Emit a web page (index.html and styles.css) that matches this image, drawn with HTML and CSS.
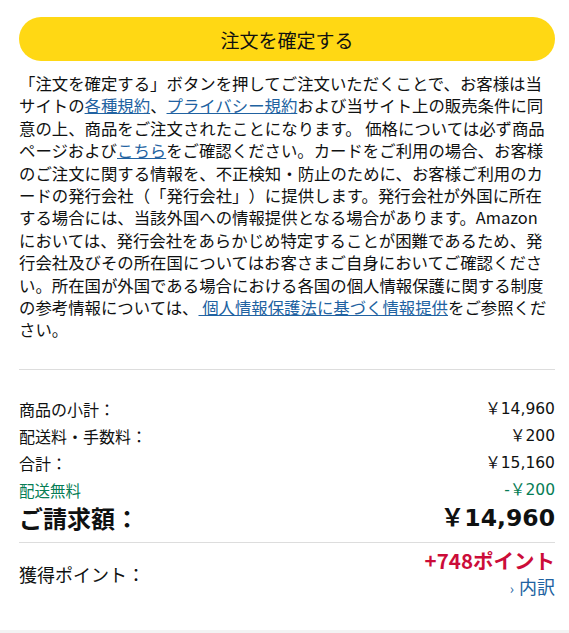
FILE: index.html
```html
<!DOCTYPE html>
<html lang="ja">
<head>
  <meta charset="UTF-8" />
  <meta name="viewport" content="width=device-width, initial-scale=1.0"/>
  <title>注文を確定する</title>
  <link rel="stylesheet" href="styles.css">
</head>
<body>

  <div class="checkout">

    <!-- Place order -->
    <button class="place-order">注文を確定する</button>

    <p class="legal">「注文を確定する」ボタンを押してご注文いただくことで、お客様は当サイトの<a href="#">各種規約</a>、<a href="#">プライバシー規約</a>および当サイト上の販売条件に同意の上、商品をご注文されたことになります。 価格については必ず商品ページおよび<a href="#">こちら</a>をご確認ください。カードをご利用の場合、お客様のご注文に関する情報を、不正検知・防止のために、お客様ご利用のカードの発行会社（「発行会社」）に提供します。発行会社が外国に所在する場合には、当該外国への情報提供となる場合があります。Amazonにおいては、発行会社をあらかじめ特定することが困難であるため、発行会社及びその所在国についてはお客さまご自身においてご確認ください。所在国が外国である場合における各国の個人情報保護に関する制度の参考情報については、<a href="#">&nbsp;個人情報保護法に基づく情報提供</a>をご参照ください。</p>

    <!-- Order summary -->
    <div class="summary">
      <div class="row">
        <span>商品の小計：</span>
        <span class="amount">￥14,960</span>
      </div>
      <div class="row">
        <span>配送料・手数料：</span>
        <span class="amount">￥200</span>
      </div>
      <div class="row">
        <span>合計：</span>
        <span class="amount">￥15,160</span>
      </div>
      <div class="row discount">
        <span>配送無料</span>
        <span class="amount">-￥200</span>
      </div>
      <div class="row total">
        <span>ご請求額：</span>
        <span class="amount">￥14,960</span>
      </div>
    </div>

    <div class="points">
      <span class="points-label">獲得ポイント：</span>
      <div class="points-value">
        <div class="points-amount">+748ポイント</div>
        <a href="#" class="points-detail"><span class="chev">›</span>内訳</a>
      </div>
    </div>

  </div>

</body>
</html>
```

FILE: styles.css
```css
html {
  background: #f3f3f3;
}

body {
  margin: 0;
  font-family: "Noto Sans CJK JP", "Noto Sans", sans-serif;
  color: #0f1111;
  text-spacing-trim: space-all;
}

.checkout {
  background: white;
  padding: 17px 14px 29px 19px;
}

.place-order {
  display: block;
  width: 100%;
  height: 44px;
  border: none;
  border-radius: 22px;
  background: #ffd814;
  color: #0f1111;
  font-family: inherit;
  font-size: 19px;
  cursor: pointer;
}

.legal {
  margin: 11px 0 0;
  padding-right: 4px;
  font-size: 16.4px;
  line-height: 22.4px;
}

.legal a {
  color: #2162a1;
  text-decoration: underline;
}

.summary {
  margin-top: 28px;
  padding-top: 26px;
  border-top: 1px solid #dddddd;
}

.row {
  display: flex;
  justify-content: space-between;
  font-size: 16px;
  line-height: 27px;
}

.amount {
  font-family: "DejaVu Sans", "Noto Sans CJK JP", sans-serif;
  font-size: 15.5px;
}

.row.discount {
  color: #067d55;
  font-size: 15.5px;
}

.row.total {
  font-size: 24px;
  font-weight: bold;
  line-height: 28px;
}

.row.total .amount {
  font-size: 23.5px;
}

.points {
  display: flex;
  justify-content: space-between;
  align-items: center;
  margin-top: 10px;
  padding-top: 4px;
  border-top: 1px solid #dddddd;
}

.points-label {
  font-size: 18px;
}

.points-value {
  text-align: right;
}

.points-amount {
  color: #cc0c39;
  font-size: 20.5px;
  font-weight: bold;
  line-height: 26px;
}

.points-detail {
  display: inline-block;
  color: #2162a1;
  font-size: 18px;
  line-height: 26px;
  text-decoration: none;
}

.chev {
  font-size: 14px;
  margin-right: 5px;
}
```
